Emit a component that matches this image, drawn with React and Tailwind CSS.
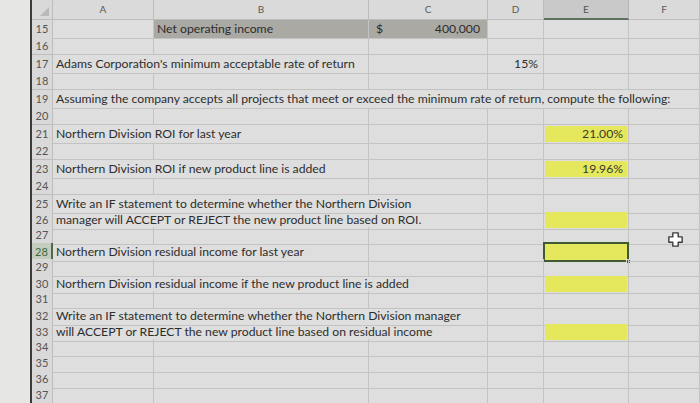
import React from "react";

const ROW_GRID = "grid grid-cols-[21px_101px_215px_119px_56px_85px_1fr]";
const LINE = "border-r border-b border-[#c3c3c3]";

function Cell({ span = 1, className = "", children }) {
  const spans = {
    1: "col-span-1",
    2: "col-span-2",
    3: "col-span-3",
    6: "col-span-6",
  };
  return (
    <div
      className={`${spans[span]} ${LINE} relative flex items-center whitespace-nowrap overflow-visible ${className}`}
    >
      {children}
    </div>
  );
}

function Row({ n, tall, active, children }) {
  return (
    <div className={`${ROW_GRID} ${tall ? "h-[17.5px]" : "h-[16px]"}`}>
      <div
        className={`flex items-center justify-center text-[11px] border-b border-r ${
          active
            ? "bg-[#c4ccbf] text-[#3f6a3b] border-r-2 border-r-[#4f6a48] border-b-[#b5b5b5]"
            : "bg-[#d9d9d9] text-[#555] border-[#bdbdbd]"
        }`}
      >
        {n}
      </div>
      {children}
    </div>
  );
}

const Text = ({ children }) => <span className="pl-[3px] text-[#2d2d2d]">{children}</span>;

const Yellow = ({ children }) => (
  <div className="absolute inset-x-[1px] inset-y-[1px] bg-[#e5e75c] flex items-center justify-end pr-[4px] text-[#3a3a2a]">
    {children}
  </div>
);

function Blank({ n, tall }) {
  return (
    <Row n={n} tall={tall}>
      <Cell />
      <Cell />
      <Cell />
      <Cell />
      <Cell />
      <Cell />
    </Row>
  );
}

function CrossCursor() {
  return (
    <svg width="15" height="15" viewBox="0 0 14 14" className="absolute left-[668px] top-[232px]">
      <path
        d="M4.5 0.8h5v3.7h3.7v5H9.5v3.7h-5V9.5H0.8v-5h3.7z"
        fill="#fff"
        stroke="#3a3a3a"
        strokeWidth="1.3"
        strokeLinejoin="round"
      />
    </svg>
  );
}

export default function App() {
  const cols = ["A", "B", "C", "D", "E", "F"];
  return (
    <div className="relative w-[700px] h-[403px] overflow-hidden flex bg-[#e3e3e3] font-['Lato','Liberation_Sans',sans-serif] text-[12.2px]">
      {/* screen bezel edge */}
      <div className="w-[32px] shrink-0 bg-[#e6e6e4] border-r-2 border-[#3b3b3b]" />

      <div className="flex-1 flex flex-col bg-[#dedede]">
        {/* column headers */}
        <div className={`${ROW_GRID} h-[20px]`}>
          <div className="relative bg-[#d9d9d9] border-r border-b border-[#bdbdbd]">
            <div className="absolute right-[3px] bottom-[3px] w-0 h-0 border-l-[9px] border-l-transparent border-b-[9px] border-b-[#b9b9b9]" />
          </div>
          {cols.map((c) => (
            <div
              key={c}
              className={`flex items-center justify-center text-[10px] border-r ${
                c === "E"
                  ? "bg-[#c9c9c9] text-[#555] border-b-2 border-b-[#617160] border-r-[#b5b5b5]"
                  : "bg-[#dadada] text-[#5a5a5a] border-b border-[#bdbdbd]"
              }`}
            >
              {c}
            </div>
          ))}
        </div>

        <Row n={15} tall>
          <Cell />
          <Cell className="bg-[#aaa9a4]">
            <Text>Net operating income</Text>
          </Cell>
          <Cell className="bg-[#aaa9a4] justify-between px-[7px] text-[#2d2d2d]">
            <span>$</span>
            <span>400,000</span>
          </Cell>
          <Cell />
          <Cell />
          <Cell />
        </Row>
        <Blank n={16} tall />
        <Row n={17} tall>
          <Cell span={2}>
            <Text>Adams Corporation's minimum acceptable rate of return</Text>
          </Cell>
          <Cell />
          <Cell className="justify-end pr-[5px] text-[#2d2d2d]">15%</Cell>
          <Cell />
          <Cell />
        </Row>
        <Blank n={18} tall />
        <Row n={19} tall>
          <Cell span={6}>
            <Text>
              Assuming the company accepts all projects that meet or exceed the minimum rate of return, compute the
              following:
            </Text>
          </Cell>
        </Row>
        <Blank n={20} tall />
        <Row n={21} tall>
          <Cell span={2}>
            <Text>Northern Division ROI for last year</Text>
          </Cell>
          <Cell />
          <Cell />
          <Cell>
            <Yellow>21.00%</Yellow>
          </Cell>
          <Cell />
        </Row>
        <Blank n={22} tall />
        <Row n={23} tall>
          <Cell span={2}>
            <Text>Northern Division ROI if new product line is added</Text>
          </Cell>
          <Cell />
          <Cell />
          <Cell>
            <Yellow>19.96%</Yellow>
          </Cell>
          <Cell />
        </Row>
        <Blank n={24} tall />
        <Row n={25}>
          <Cell span={3}>
            <Text>Write an IF statement to determine whether the Northern Division</Text>
          </Cell>
          <Cell />
          <Cell />
          <Cell />
        </Row>
        <Row n={26}>
          <Cell span={3}>
            <Text>manager will ACCEPT or REJECT the new product line based on ROI.</Text>
          </Cell>
          <Cell />
          <Cell>
            <Yellow />
          </Cell>
          <Cell />
        </Row>
        <Blank n={27} />
        <Row n={28} active>
          <Cell span={2}>
            <Text>Northern Division residual income for last year</Text>
          </Cell>
          <Cell />
          <Cell />
          <Cell>
            <div className="absolute -inset-[1px] bg-[#e5e75c] border-2 border-[#3f5a33]" />
            <div className="absolute -right-[3px] -bottom-[3px] w-[5px] h-[5px] bg-[#3f5a33] border border-[#dedede]" />
          </Cell>
          <Cell />
        </Row>
        <Blank n={29} />
        <Row n={30}>
          <Cell span={3}>
            <Text>Northern Division residual income if the new product line is added</Text>
          </Cell>
          <Cell />
          <Cell>
            <Yellow />
          </Cell>
          <Cell />
        </Row>
        <Blank n={31} />
        <Row n={32}>
          <Cell span={3}>
            <Text>Write an IF statement to determine whether the Northern Division manager</Text>
          </Cell>
          <Cell />
          <Cell />
          <Cell />
        </Row>
        <Row n={33}>
          <Cell span={3}>
            <Text>will ACCEPT or REJECT the new product line based on residual income</Text>
          </Cell>
          <Cell />
          <Cell>
            <Yellow />
          </Cell>
          <Cell />
        </Row>
        <Blank n={34} />
        <Blank n={35} />
        <Blank n={36} />
        <Blank n={37} />
      </div>

      <CrossCursor />
    </div>
  );
}
